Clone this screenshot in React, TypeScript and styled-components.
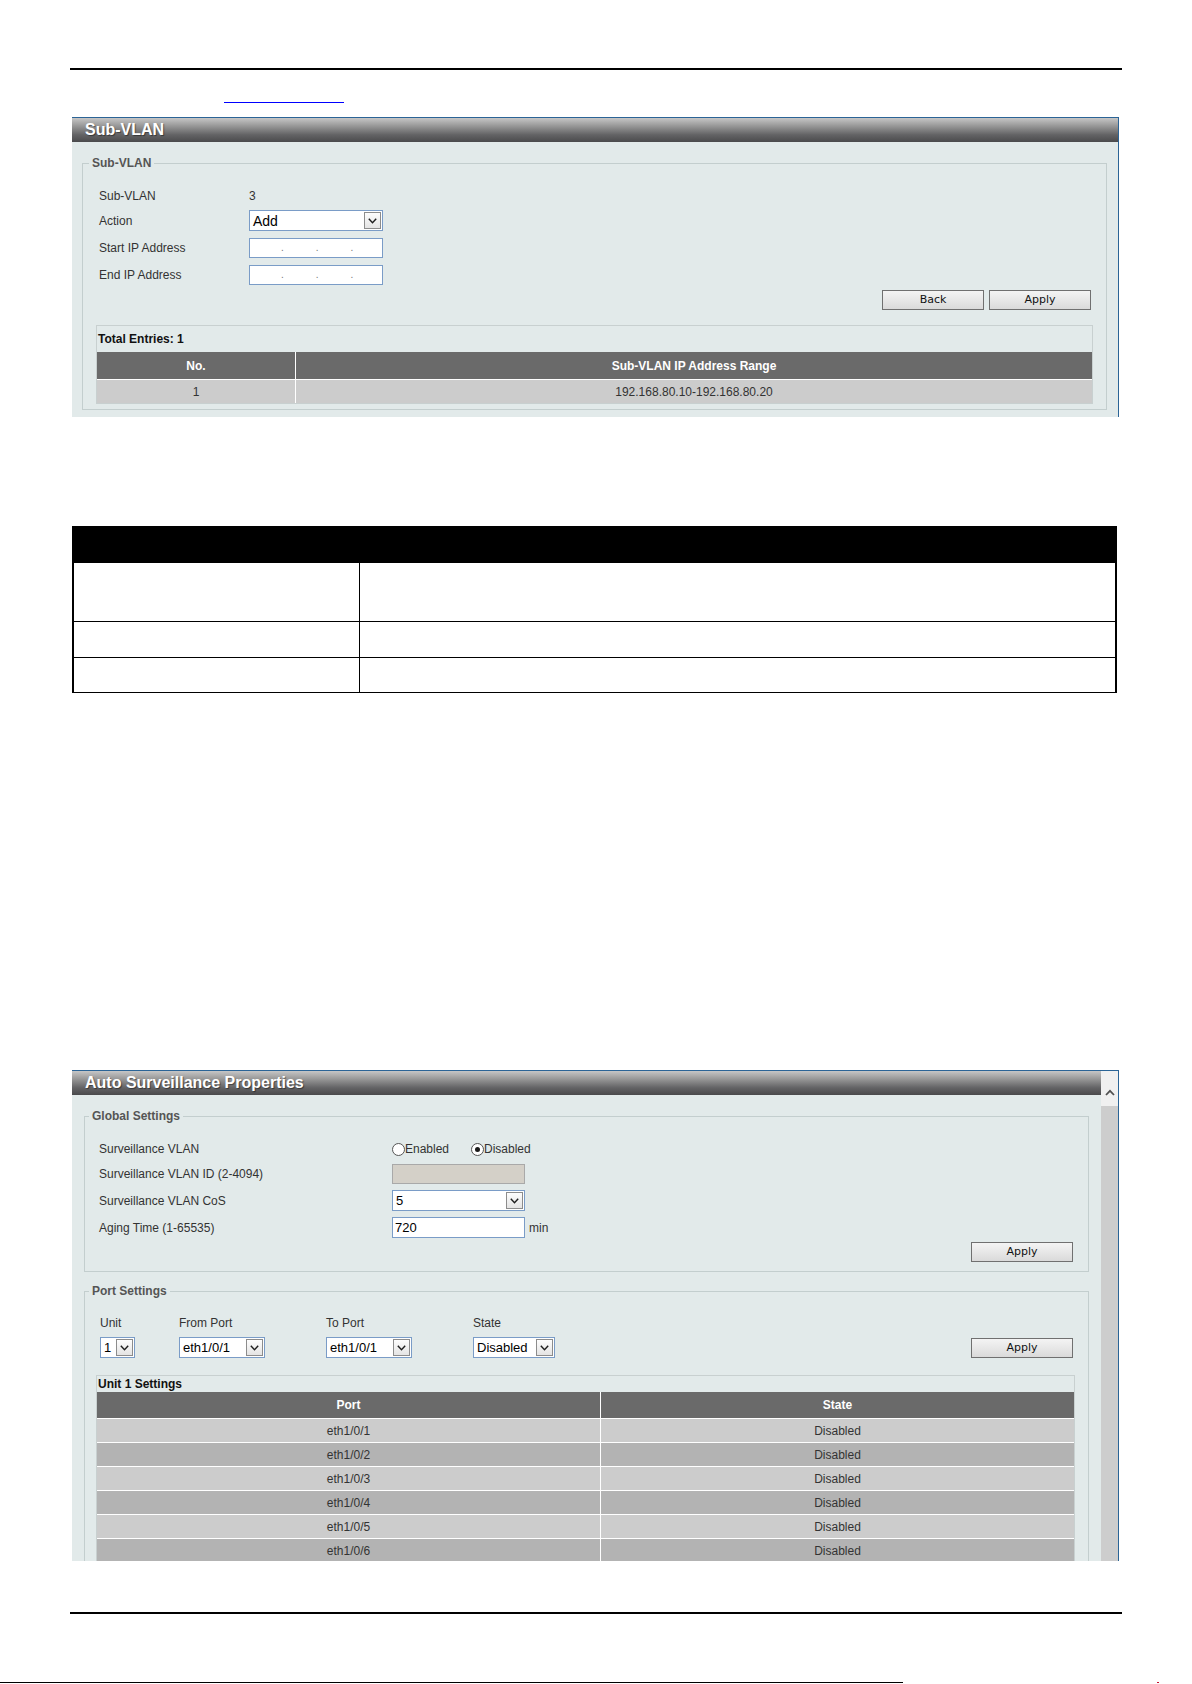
import React from 'react';
import styled, { createGlobalStyle } from 'styled-components';

const GlobalStyle = createGlobalStyle`
  html, body {
    margin: 0;
    padding: 0;
    background: #fff;
  }
  body {
    font-family: "Liberation Sans", Arial, sans-serif;
  }
`;

const Page = styled.div`
  width: 1192px;
  height: 1684px;
  overflow: hidden;
  display: flex;
  flex-direction: column;
  background: #fff;
`;

const Rule = styled.div<{ $top: number; $left: number; $width: number; $thick: number }>`
  flex: none;
  margin-top: ${p => p.$top}px;
  margin-left: ${p => p.$left}px;
  width: ${p => p.$width}px;
  height: ${p => p.$thick}px;
  background: #000;
`;

const TopicLink = styled.a`
  flex: none;
  display: block;
  margin: 32px 0 0 224px;
  width: 120px;
  height: 0;
  border-bottom: 1px solid #0000ff;
`;

const FootRow = styled.div`
  flex: none;
  margin-top: 68px;
  height: 1px;
  display: flex;
`;

const FootLine = styled.div`
  width: 903px;
  background: #000;
`;

const FootTick = styled.div`
  width: 2px;
  margin-left: 254px;
  background: #c8102e;
`;

/* ---------- web UI panel ---------- */

const Panel = styled.section<{ $top: number; $height: number }>`
  flex: none;
  margin: ${p => p.$top}px 0 0 72px;
  width: 1047px;
  height: ${p => p.$height}px;
  box-sizing: border-box;
  border-top: 1px solid #2b6496;
  border-right: 1px solid #2b6496;
  display: flex;
  overflow: hidden;
`;

const PanelMain = styled.div`
  flex: 1;
  min-width: 0;
  display: flex;
  flex-direction: column;
  background: #e2eaea;
`;

const TitleBar = styled.div`
  flex: none;
  height: 24px;
  padding-left: 13px;
  background: linear-gradient(to bottom, #c6c6c6 0%, #959595 35%, #636365 70%, #4a4a4c 100%);
  color: #fff;
  font: bold 16px/24px "Liberation Sans", Arial, sans-serif;
  text-shadow: 1px 1px 1px rgba(0, 0, 0, 0.45);
`;

const ScrollBar = styled.div`
  flex: none;
  width: 17px;
  display: flex;
  flex-direction: column;
  background: #f0f0f0;
`;

const ScrollUp = styled.div`
  flex: none;
  height: 35px;
  box-sizing: border-box;
  padding-top: 18px;
  display: flex;
  justify-content: center;
  align-items: flex-start;
`;

const ScrollTrack = styled.div`
  flex: 1;
  background: #cdcdcd;
`;

const Fieldset = styled.fieldset<{ $top: number; $left: number; $right: number }>`
  flex: none;
  margin: ${p => p.$top}px ${p => p.$right}px 0 ${p => p.$left}px;
  padding: 0;
  min-width: 0;
  border: 1px solid #c3cece;
`;

const Legend = styled.legend<{ $offset: number }>`
  margin-left: ${p => p.$offset}px;
  padding: 0 3px;
  font: bold 12px/14px "Liberation Sans", Arial, sans-serif;
  color: #555;
`;

const FieldBody = styled.div<{ $top: number; $bottom: number }>`
  padding: ${p => p.$top}px 0 ${p => p.$bottom}px 0;
`;

const FormRow = styled.div<{ $gap: number; $h: number; $indent: number }>`
  display: flex;
  align-items: center;
  margin-top: ${p => p.$gap}px;
  height: ${p => p.$h}px;
  padding-left: ${p => p.$indent}px;
`;

const Label = styled.div<{ $w: number }>`
  flex: none;
  width: ${p => p.$w}px;
  font-size: 12px;
  color: #333;
`;

const Value = styled.span`
  font-size: 12px;
  color: #333;
`;

const Unit = styled.span`
  margin-left: 4px;
  font-size: 12px;
  color: #333;
`;

const TextBox = styled.div<{ $w: number; $h: number; $disabled?: boolean }>`
  width: ${p => p.$w}px;
  height: ${p => p.$h}px;
  box-sizing: border-box;
  border: 1px solid ${p => (p.$disabled ? '#a9a9a9' : '#7a9cc7')};
  background: ${p => (p.$disabled ? '#d4d0c8' : '#fff')};
  padding-left: 2px;
  display: flex;
  align-items: center;
  font-size: 13px;
  color: #000;
`;

const IpDots = styled.div`
  display: flex;
  gap: 32px;
  padding-left: 29px;
  font-size: 10px;
  color: #777;
  line-height: 1;
`;

const SelectBox = styled.div<{ $w: number; $size: number }>`
  flex: none;
  width: ${p => p.$w}px;
  height: 21px;
  box-sizing: border-box;
  border: 1px solid #7a9cc7;
  background: #fff;
  display: flex;
  align-items: center;
  padding: 1px;
  font-size: ${p => p.$size}px;
  color: #000;
`;

const SelectText = styled.span`
  flex: 1;
  padding-left: 2px;
  white-space: nowrap;
  overflow: hidden;
`;

const SelectArrow = styled.span`
  flex: none;
  width: 17px;
  height: 17px;
  box-sizing: border-box;
  border: 1px solid #8c8c8c;
  background: linear-gradient(to bottom, #fdfdfd, #e4e4e4);
  display: flex;
  align-items: center;
  justify-content: center;
`;

const RadioOption = styled.label<{ $w: number }>`
  display: flex;
  align-items: center;
  width: ${p => p.$w}px;
  font-size: 12px;
  color: #333;
`;

const RadioDot = styled.span<{ $on?: boolean }>`
  flex: none;
  width: 13px;
  height: 13px;
  box-sizing: border-box;
  border-radius: 50%;
  border: 1px solid #555;
  background: #fff;
  display: flex;
  align-items: center;
  justify-content: center;

  &::after {
    content: '';
    width: 5px;
    height: 5px;
    border-radius: 50%;
    background: ${p => (p.$on ? '#1a1a1a' : 'transparent')};
  }
`;

const ButtonRow = styled.div<{ $gap: number }>`
  display: flex;
  justify-content: flex-end;
  gap: 5px;
  margin-top: ${p => p.$gap}px;
  padding-right: 15px;
`;

const Button = styled.button`
  width: 102px;
  height: 20px;
  padding: 0;
  box-sizing: border-box;
  border: 1px solid #707070;
  border-radius: 0;
  background: linear-gradient(to bottom, #f4f4f4, #dadada);
  font: 11px/18px "DejaVu Sans", Tahoma, sans-serif;
  color: #111;
`;

const PortGrid = styled.div`
  display: grid;
  grid-template-columns: 79px 147px 147px 1fr auto;
  grid-template-rows: 14px 21px;
  row-gap: 7px;
  align-items: center;
  padding: 0 15px;
`;

const PortCell = styled.div<{ $col: number; $row: number }>`
  grid-column: ${p => p.$col};
  grid-row: ${p => p.$row};
  font-size: 12px;
  color: #333;
`;

const DataBox = styled.div<{ $gap: number; $left: number }>`
  margin: ${p => p.$gap}px 13px 0 ${p => p.$left}px;
  border: 1px solid #c8d0d0;
`;

const BoxCaption = styled.div<{ $h: number }>`
  height: ${p => p.$h}px;
  display: flex;
  align-items: center;
  padding-left: 1px;
  font-size: 12px;
  font-weight: bold;
  color: #111;
`;

const DataGrid = styled.div<{ $cols: string }>`
  display: grid;
  grid-template-columns: ${p => p.$cols};
  gap: 1px;
  background: #fff;
`;

const HeadCell = styled.div<{ $h: number }>`
  height: ${p => p.$h}px;
  display: flex;
  align-items: center;
  justify-content: center;
  background: #6a6a6a;
  color: #fff;
  font-size: 12px;
  font-weight: bold;
`;

const Cell = styled.div<{ $alt?: boolean }>`
  height: 23px;
  display: flex;
  align-items: center;
  justify-content: center;
  background: ${p => (p.$alt ? '#b3b3b3' : '#cccccc')};
  color: #333;
  font-size: 12px;
`;

/* ---------- parameter description table ---------- */

const DescTable = styled.div`
  flex: none;
  margin: 109px 0 0 72px;
  width: 1045px;
  box-sizing: border-box;
  border-left: 2px solid #000;
  border-right: 2px solid #000;
  border-bottom: 1px solid #000;
  display: grid;
  grid-template-columns: 286px 1fr;
`;

const DescHead = styled.div`
  grid-column: 1 / -1;
  height: 36px;
  background: #000;
`;

const DescCell = styled.div<{ $h: number }>`
  height: ${p => p.$h}px;
  box-sizing: border-box;
  border-top: 1px solid #000;
  &:nth-child(even) {
    border-right: 1px solid #000;
  }
`;

/* ---------- small drawings ---------- */

const Chevron = () => (
  <svg width="9" height="6" viewBox="0 0 9 6">
    <polyline points="0.8,0.8 4.5,4.8 8.2,0.8" fill="none" stroke="#1e1e1e" strokeWidth="1.4" />
  </svg>
);

const ChevronUp = () => (
  <svg width="10" height="7" viewBox="0 0 10 7">
    <polyline points="1,6 5,1.8 9,6" fill="none" stroke="#505050" strokeWidth="1.8" />
  </svg>
);

const Select: React.FC<{ w: number; size?: number; value: string }> = ({ w, size = 13, value }) => (
  <SelectBox $w={w} $size={size}>
    <SelectText>{value}</SelectText>
    <SelectArrow>
      <Chevron />
    </SelectArrow>
  </SelectBox>
);

const IpBox = () => (
  <TextBox $w={134} $h={20}>
    <IpDots>
      <span>.</span>
      <span>.</span>
      <span>.</span>
    </IpDots>
  </TextBox>
);

const ports = [1, 2, 3, 4, 5, 6].map(n => ({ port: `eth1/0/${n}`, state: 'Disabled' }));

const App: React.FC = () => {
  return (
    <Page>
      <GlobalStyle />
      <Rule $top={68} $left={70} $width={1052} $thick={2} />
      <TopicLink href="#sub-vlan" aria-label="Sub-VLAN" />

      <Panel $top={14} $height={300}>
        <PanelMain>
          <TitleBar>Sub-VLAN</TitleBar>
          <Fieldset $top={14} $left={10} $right={11}>
            <Legend $offset={6}>Sub-VLAN</Legend>
            <FieldBody $top={17} $bottom={5}>
              <FormRow $gap={0} $h={18} $indent={16}>
                <Label $w={150}>Sub-VLAN</Label>
                <Value>3</Value>
              </FormRow>
              <FormRow $gap={5} $h={21} $indent={16}>
                <Label $w={150}>Action</Label>
                <Select w={134} size={14} value="Add" />
              </FormRow>
              <FormRow $gap={7} $h={20} $indent={16}>
                <Label $w={150}>Start IP Address</Label>
                <IpBox />
              </FormRow>
              <FormRow $gap={7} $h={20} $indent={16}>
                <Label $w={150}>End IP Address</Label>
                <IpBox />
              </FormRow>
              <ButtonRow $gap={5}>
                <Button>Back</Button>
                <Button>Apply</Button>
              </ButtonRow>
              <DataBox $gap={15} $left={13}>
                <BoxCaption $h={26}>Total Entries: 1</BoxCaption>
                <DataGrid $cols="198px 1fr">
                  <HeadCell $h={27}>No.</HeadCell>
                  <HeadCell $h={27}>Sub-VLAN IP Address Range</HeadCell>
                  <Cell>1</Cell>
                  <Cell>192.168.80.10-192.168.80.20</Cell>
                </DataGrid>
              </DataBox>
            </FieldBody>
          </Fieldset>
        </PanelMain>
      </Panel>

      <DescTable>
        <DescHead />
        <DescCell $h={59} />
        <DescCell $h={59} />
        <DescCell $h={36} />
        <DescCell $h={36} />
        <DescCell $h={35} />
        <DescCell $h={35} />
      </DescTable>

      <Panel $top={377} $height={491}>
        <PanelMain>
          <TitleBar>Auto Surveillance Properties</TitleBar>

          <Fieldset $top={14} $left={12} $right={12}>
            <Legend $offset={4}>Global Settings</Legend>
            <FieldBody $top={17} $bottom={9}>
              <FormRow $gap={0} $h={18} $indent={14}>
                <Label $w={293}>Surveillance VLAN</Label>
                <RadioOption $w={79}>
                  <RadioDot />
                  Enabled
                </RadioOption>
                <RadioOption $w={80}>
                  <RadioDot $on />
                  Disabled
                </RadioOption>
              </FormRow>
              <FormRow $gap={6} $h={20} $indent={14}>
                <Label $w={293}>Surveillance VLAN ID (2-4094)</Label>
                <TextBox $w={133} $h={20} $disabled />
              </FormRow>
              <FormRow $gap={6} $h={21} $indent={14}>
                <Label $w={293}>Surveillance VLAN CoS</Label>
                <Select w={133} value="5" />
              </FormRow>
              <FormRow $gap={6} $h={21} $indent={14}>
                <Label $w={293}>Aging Time (1-65535)</Label>
                <TextBox $w={133} $h={21}>720</TextBox>
                <Unit>min</Unit>
              </FormRow>
              <ButtonRow $gap={4}>
                <Button>Apply</Button>
              </ButtonRow>
            </FieldBody>
          </Fieldset>

          <Fieldset $top={12} $left={12} $right={12}>
            <Legend $offset={4}>Port Settings</Legend>
            <FieldBody $top={18} $bottom={12}>
              <PortGrid>
                <PortCell $col={1} $row={1}>Unit</PortCell>
                <PortCell $col={2} $row={1}>From Port</PortCell>
                <PortCell $col={3} $row={1}>To Port</PortCell>
                <PortCell $col={4} $row={1}>State</PortCell>
                <PortCell $col={1} $row={2}>
                  <Select w={35} value="1" />
                </PortCell>
                <PortCell $col={2} $row={2}>
                  <Select w={86} value="eth1/0/1" />
                </PortCell>
                <PortCell $col={3} $row={2}>
                  <Select w={86} value="eth1/0/1" />
                </PortCell>
                <PortCell $col={4} $row={2}>
                  <Select w={82} value="Disabled" />
                </PortCell>
                <PortCell $col={5} $row={2}>
                  <Button>Apply</Button>
                </PortCell>
              </PortGrid>
              <DataBox $gap={17} $left={11}>
                <BoxCaption $h={16}>Unit 1 Settings</BoxCaption>
                <DataGrid $cols="503px 1fr">
                  <HeadCell $h={26}>Port</HeadCell>
                  <HeadCell $h={26}>State</HeadCell>
                  {ports.map((row, i) => (
                    <React.Fragment key={row.port}>
                      <Cell $alt={i % 2 === 1}>{row.port}</Cell>
                      <Cell $alt={i % 2 === 1}>{row.state}</Cell>
                    </React.Fragment>
                  ))}
                </DataGrid>
              </DataBox>
            </FieldBody>
          </Fieldset>
        </PanelMain>
        <ScrollBar>
          <ScrollUp>
            <ChevronUp />
          </ScrollUp>
          <ScrollTrack />
        </ScrollBar>
      </Panel>

      <Rule $top={51} $left={70} $width={1052} $thick={2} />
      <FootRow>
        <FootLine />
        <FootTick />
      </FootRow>
    </Page>
  );
};

export default App;
